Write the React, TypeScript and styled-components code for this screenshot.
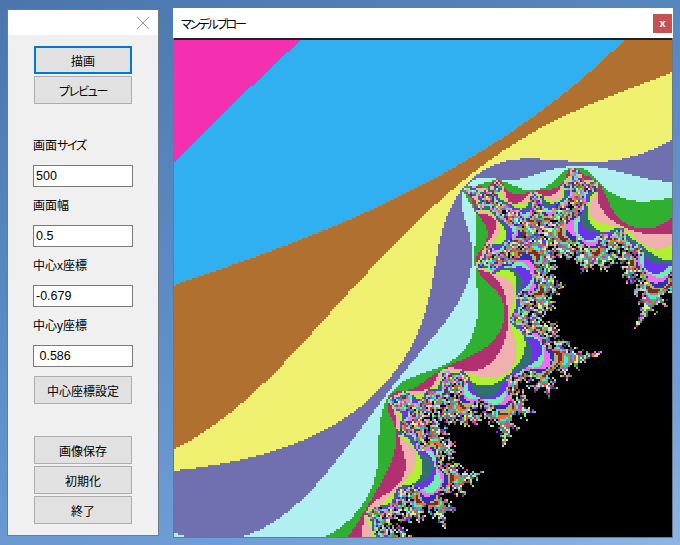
import React, { useEffect, useRef } from "react";
import styled, { createGlobalStyle } from "styled-components";

const Global = createGlobalStyle`
  html, body { margin: 0; padding: 0; height: 100%; }
  body { overflow: hidden; font-family: "Liberation Sans", "Noto Sans CJK JP", sans-serif; }
  #root { height: 100%; }
`;

const Desktop = styled.div`
  width: 680px;
  height: 545px;
  display: flex;
  align-items: flex-start;
  gap: 14px;
  padding: 8px 0 0 7px;
  box-sizing: border-box;
  background: linear-gradient(160deg, #4a76ad 0%, #5d8cc4 45%, #6f9fd6 80%, #8fb6e2 100%);
`;

const ControlWindow = styled.aside`
  width: 152px;
  height: 527px;
  margin-top: 1px;
  box-sizing: border-box;
  border: 1px solid #6c7a8c;
  background: #f0f0f0;
  display: flex;
  flex-direction: column;
`;

const ControlTitle = styled.div`
  height: 25px;
  background: #fff;
  display: flex;
  align-items: center;
  justify-content: flex-end;
  padding-right: 8px;
`;

const ControlBody = styled.div`
  display: flex;
  flex-direction: column;
  padding: 11px 0 0 25px;
`;

const Btn = styled.button<{ $focused?: boolean; $top?: number }>`
  width: 98px;
  height: 28px;
  margin: ${(p) => p.$top ?? 2}px 0 0 1px;
  padding: 0;
  box-sizing: border-box;
  background: #e1e1e1;
  border: ${(p) => (p.$focused ? "2px solid #0078d7" : "1px solid #adadad")};
  font: 12px "Noto Sans CJK JP", sans-serif;
  font-feature-settings: "palt";
  color: #000;
`;

const FieldLabel = styled.label<{ $top: number }>`
  height: 20px;
  margin-top: ${(p) => p.$top}px;
  line-height: 20px;
  font-size: 12px;
  font-family: "Noto Sans CJK JP", sans-serif;
  font-feature-settings: "palt";
  color: #000;
`;

const Kana = styled.span`
  letter-spacing: -1.3px;
`;

const Latin = styled.span`
  font-family: "Liberation Sans", sans-serif;
`;

const Field = styled.input`
  width: 100px;
  height: 22px;
  margin-top: 10px;
  padding: 0 2px;
  box-sizing: border-box;
  border: 1px solid #7a7a7a;
  background: #fff;
  font: 12.5px "Liberation Sans", sans-serif;
  color: #000;
  outline: none;
`;

const PlotWindow = styled.main`
  width: 500px;
  height: 530px;
  display: flex;
  flex-direction: column;
`;

const PlotTitle = styled.header`
  height: 30px;
  flex: none;
  box-sizing: border-box;
  background: #fff;
  display: flex;
  align-items: center;
  justify-content: space-between;
  padding: 0 1px 0 8px;
  font: 12px "Noto Sans CJK JP", sans-serif;
  font-feature-settings: "palt";
  letter-spacing: -2px;
  color: #000;
`;

const PlotClose = styled.div`
  width: 19px;
  height: 19px;
  background: #c75050;
  color: #fff;
  letter-spacing: 0;
  font: bold 11px/18px "Liberation Sans", sans-serif;
  text-align: center;
`;

const PlotFrame = styled.div`
  flex: 1;
  display: flex;
  flex-direction: column;
  background: #000;
  border: solid #69788c;
  border-width: 0 1px 1px 1px;
`;

const Rule = styled.div`
  height: 2px;
  flex: none;
  background: #222;
`;

const Plot = styled.canvas`
  display: block;
  width: 498px;
  height: 497px;
  image-rendering: pixelated;
`;

const PALETTE = [
  "#f530b0", "#30b0f0", "#b07030", "#f0f070", "#7070b0", "#b0f0f0", "#30b030", "#b03070",
  "#f0b0b0", "#b0f030", "#307070", "#7030f0", "#70f0b0", "#f070f0", "#3030b0", "#b0b070",
  "#703030", "#f07030", "#30f0f0", "#70b030",
];

function Mandelbrot() {
  const ref = useRef<HTMLCanvasElement>(null);
  useEffect(() => {
    const cv = ref.current;
    if (!cv) return;
    const ctx = cv.getContext("2d");
    if (!ctx) return;
    const W = cv.width;
    const H = cv.height;
    const cx = -0.679;
    const cy = 0.586;
    const span = 0.5;
    for (let py = 0; py < H; py++) {
      for (let px = 0; px < W; px++) {
        const a = cx - span / 2 + (span * (px + 0.5)) / W;
        const b = cy + span / 2 - (span * (py + 0.5)) / H;
        let x = 0;
        let y = 0;
        let n = 0;
        const max = 60;
        while (n < max && 1.05 * x * x + y * y <= 3) {
          const t = x * x - y * y + a;
          y = 2 * x * y + b;
          x = t;
          n++;
        }
        ctx.fillStyle = n >= max ? "#000" : PALETTE[(n - 3 + PALETTE.length * 4) % PALETTE.length];
        ctx.fillRect(px, py, 1, 1);
      }
    }
  }, []);
  return <Plot ref={ref} width={249} height={249} />;
}

export default function App() {
  return (
    <Desktop>
      <Global />
      <ControlWindow>
        <ControlTitle>
          <svg width="14" height="14" viewBox="0 0 14 14" fill="none" stroke="#9a9a9a" strokeWidth="1">
            <path d="M1 1L13 13M13 1L1 13" />
          </svg>
        </ControlTitle>
        <ControlBody>
          <Btn $focused $top={0}>描画</Btn>
          <Btn><Kana>プレビュー</Kana></Btn>
          <FieldLabel $top={31}>画面<Kana>サイズ</Kana></FieldLabel>
          <Field readOnly value="500" />
          <FieldLabel $top={8}>画面幅</FieldLabel>
          <Field readOnly value="0.5" />
          <FieldLabel $top={8}>中心<Latin>x</Latin>座標</FieldLabel>
          <Field readOnly value="-0.679" />
          <FieldLabel $top={8}>中心<Latin>y</Latin>座標</FieldLabel>
          <Field readOnly value=" 0.586" />
          <Btn $top={9}>中心座標設定</Btn>
          <Btn $top={32}>画像保存</Btn>
          <Btn>初期化</Btn>
          <Btn>終了</Btn>
        </ControlBody>
      </ControlWindow>
      <PlotWindow>
        <PlotTitle>
          マンデルブロー
          <PlotClose>x</PlotClose>
        </PlotTitle>
        <PlotFrame>
          <Rule />
          <Mandelbrot />
        </PlotFrame>
      </PlotWindow>
    </Desktop>
  );
}
